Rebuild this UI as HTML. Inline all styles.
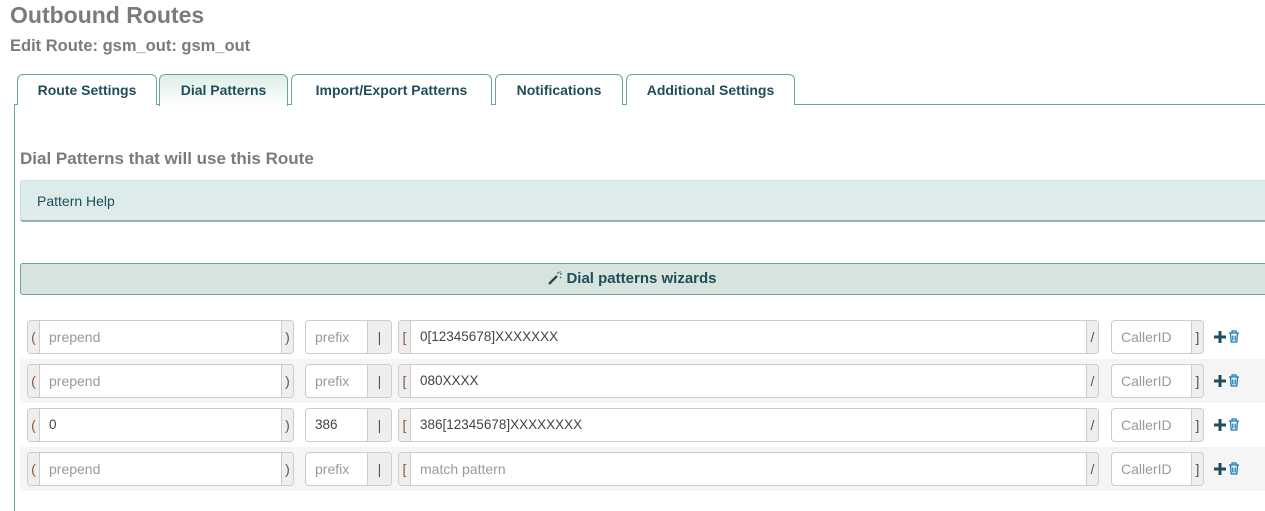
<!DOCTYPE html>
<html><head><style>
*{box-sizing:border-box;margin:0;padding:0}
body{width:1265px;height:511px;overflow:hidden;background:#fff;font-family:"Liberation Sans",sans-serif;position:relative;color:#333}
.a{position:absolute}
h1{position:absolute;left:10px;top:2px;font-size:23px;font-weight:bold;color:#7b7b7b}
h2{position:absolute;left:10px;top:37px;font-size:16.5px;font-weight:bold;color:#7b7b7b}
.tab{position:absolute;top:74px;height:31px;border:1px solid #6aa88a;border-bottom:none;border-radius:6px 6px 0 0;background:#fff;color:#1f4d5a;font-weight:bold;font-size:14px;text-align:center;line-height:30px}
.tab.act{background:linear-gradient(#ddeee6,#fff);height:32px}
.grp{position:absolute;height:34px;border:1px solid #ccc;border-radius:4px;background:#fff;font-size:14px;color:#999;overflow:hidden}
.ad{position:absolute;top:0;height:32px;background:#eee;text-align:center;line-height:32px;font-size:14px;color:#555}
.in{position:absolute;top:0;height:32px;line-height:32px;padding-left:9px}
.dark{color:#444;font-size:13.5px}
.o{color:#8b5a3c}
.stripe{position:absolute;left:20px;width:1245px;height:44px;background:#f5f5f5}
</style></head><body>
<h1>Outbound Routes</h1>
<h2>Edit Route: gsm_out: gsm_out</h2>
<div class="a" style="left:14px;top:104px;width:1251px;height:1px;background:#6aa88a"></div>
<div class="a" style="left:14px;top:104px;width:1px;height:407px;background:#6aa88a"></div>
<div class="tab" style="left:17px;width:140px">Route Settings</div>
<div class="tab act" style="left:159px;width:129px">Dial Patterns</div>
<div class="tab" style="left:291px;width:201px">Import/Export Patterns</div>
<div class="tab" style="left:495px;width:128px">Notifications</div>
<div class="tab" style="left:626px;width:169px">Additional Settings</div>
<div class="a" style="left:20px;top:149px;font-size:17px;font-weight:bold;color:#7b7b7b">Dial Patterns that will use this Route</div>
<div class="a" style="left:20px;top:180px;width:1250px;height:42px;background:#ddebeb;border:1px solid #cfdede;border-bottom:2px solid #9ab;border-radius:3px;font-size:14px;color:#1f4d5a;padding:12px 0 0 16px">Pattern Help</div>
<div class="a" style="left:20px;top:263px;width:1250px;height:32px;background:#d7e4dd;border:1px solid #6aa88a;border-radius:3px;font-size:15px;font-weight:bold;color:#1f4d5a;text-align:center;line-height:30px;padding-right:25px"><svg width="14" height="14" style="vertical-align:-2px;margin-right:4px"><path d="M1 13L9 5" stroke="#1f4d5a" stroke-width="2.4"/><path d="M10 1v2M12 3h2M11.5 1.5l1-1M12 6l1 1" stroke="#1f4d5a" stroke-width="1"/></svg>Dial patterns wizards</div>
<div class="stripe" style="top:359px"></div>
<div class="stripe" style="top:447px"></div>
<script>
var rows=[["prepend",0,"prefix",0,"0[12345678]XXXXXXX",1],["prepend",0,"prefix",0,"080XXXX",1],["0",1,"386",1,"386[12345678]XXXXXXXX",1],["prepend",0,"prefix",0,"match pattern",0]];
var h="";
rows.forEach(function(r,i){var t=320+i*44;
h+='<div class="grp" style="left:27px;top:'+t+'px;width:267px"><div class="ad o" style="left:0;width:12px;border-right:1px solid #ccc">(</div><div class="in'+(r[1]?' dark':'')+'" style="left:12px">'+r[0]+'</div><div class="ad" style="right:0;width:12px;border-left:1px solid #ccc">)</div></div>';
h+='<div class="grp" style="left:305px;top:'+t+'px;width:87px"><div class="in'+(r[3]?' dark':'')+'" style="left:0">'+r[2]+'</div><div class="ad" style="right:0;width:24px;border-left:1px solid #ccc">|</div></div>';
h+='<div class="grp" style="left:398px;top:'+t+'px;width:701px"><div class="ad o" style="left:0;width:12px;border-right:1px solid #ccc">[</div><div class="in'+(r[5]?' dark':'')+'" style="left:12px">'+r[4]+'</div><div class="ad" style="right:0;width:12px;border-left:1px solid #ccc">/</div></div>';
h+='<div class="grp" style="left:1111px;top:'+t+'px;width:93px"><div class="in" style="left:0">CallerID</div><div class="ad" style="right:0;width:12px;border-left:1px solid #ccc">]</div></div>';
h+='<svg class="a" style="left:1214px;top:'+(t+11)+'px" width="12" height="12"><path d="M4.5 0h3v4.5h4.5v3h-4.5v4.5h-3v-4.5h-4.5v-3h4.5z" fill="#1f4d5a"/></svg>';
h+='<svg class="a" style="left:1228px;top:'+(t+10)+'px" width="12" height="13" fill="none" stroke="#1b7bb5" stroke-width="1.3"><path d="M1 3h10M4 3V1h4v2M2.5 3.5l.7 8.5h5.6l.7-8.5M4.8 5.5v5M7.2 5.5v5"/></svg>';
});
document.write(h);
</script>
</body></html>
